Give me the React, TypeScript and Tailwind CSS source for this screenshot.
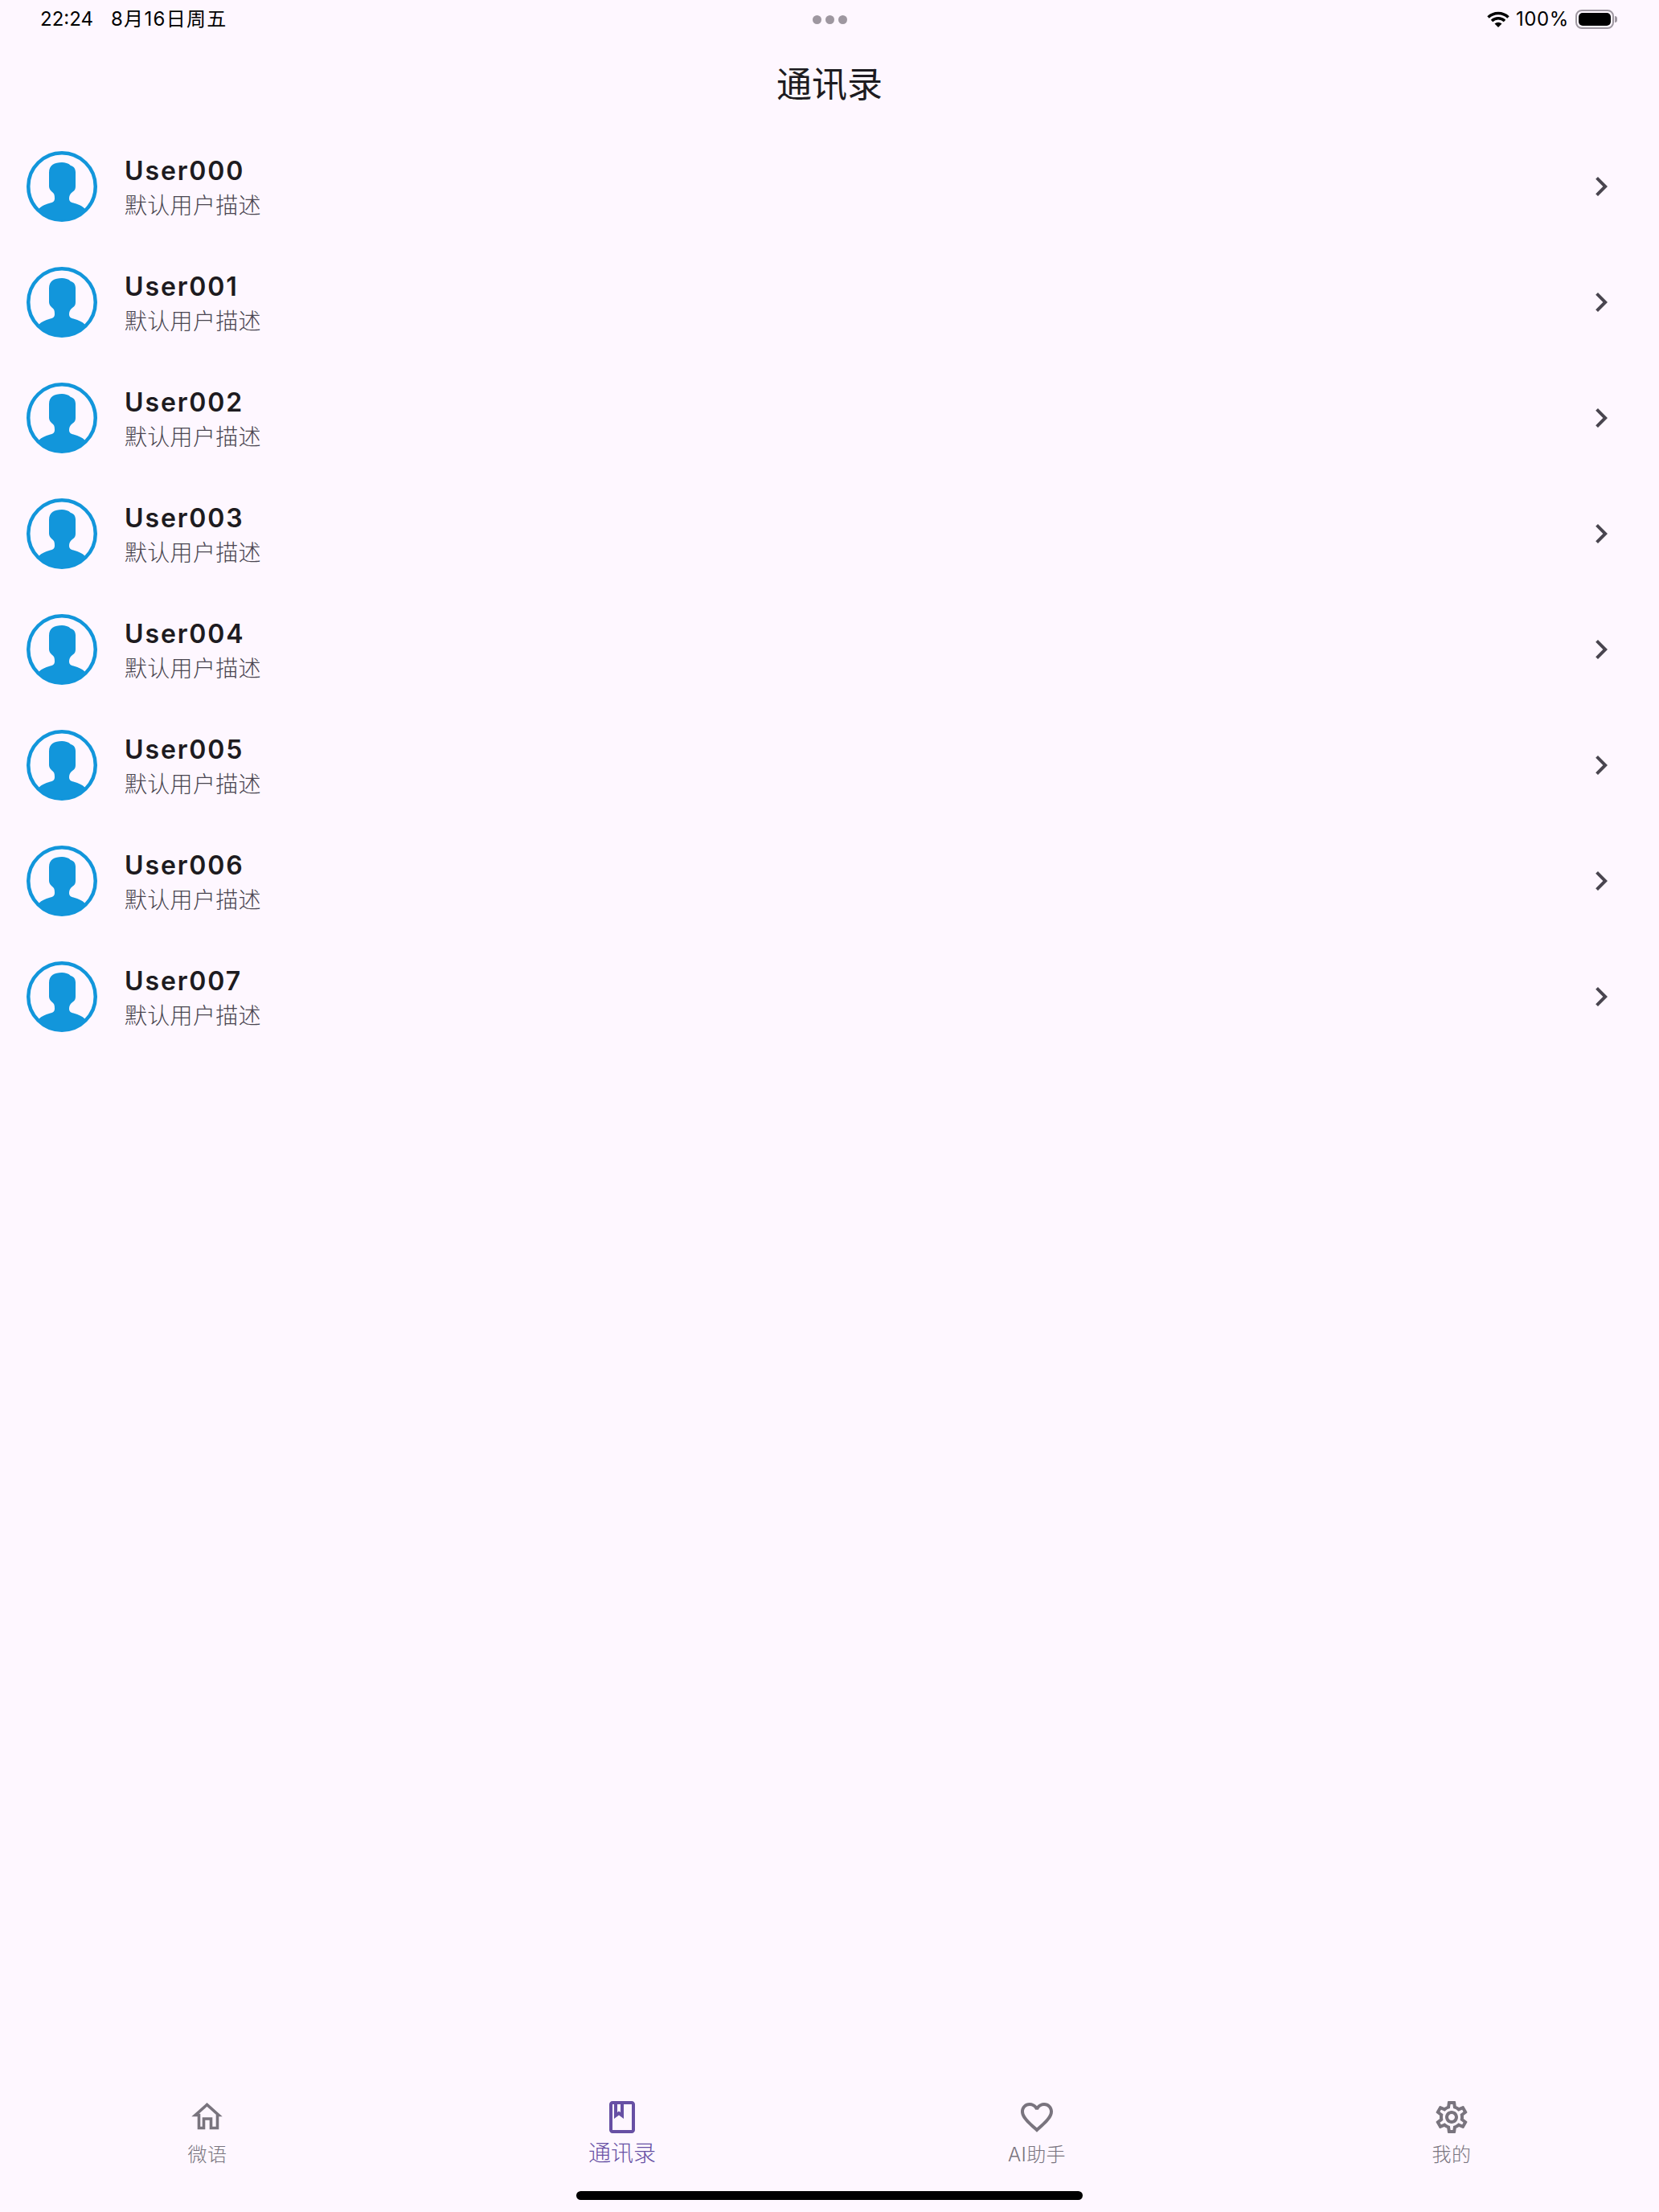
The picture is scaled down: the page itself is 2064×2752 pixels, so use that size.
import { MdChevronRight, MdFavoriteBorder, MdOutlineBook, MdOutlineSettings } from "react-icons/md";

const users = ["User000", "User001", "User002", "User003", "User004", "User005", "User006", "User007"];
const cjk = "font-['Inter','Noto_Sans_CJK_SC',sans-serif]";

function Avatar() {
  return (
    <svg viewBox="0 0 88 88" className="h-[88px] w-[88px] shrink-0">
      <defs>
        <clipPath id="avatar-clip">
          <circle cx="44" cy="44" r="42" />
        </clipPath>
      </defs>
      <circle cx="44" cy="44" r="41.75" fill="none" stroke="#1296db" strokeWidth="4.5" />
      <path
        clipPath="url(#avatar-clip)"
        fill="#1296db"
        d="M44 14C35 14 28 17 28 27L28 44C28 47 30 49 32 51C35 53 35 56 35 59C35 63 32 64 28 65C24 66 19 68 15 72L14 88L74 88L73 72C69 68 64 66 60 65C56 64 53 63 53 59C53 56 54 53 57 51C60 49 61 47 61 44L61 27C61 22 59 19 55 18C52 15 48 14 44 14Z"
      />
    </svg>
  );
}

function HomeIcon() {
  return (
    <svg viewBox="0 -2 60 60" className="h-[60px] w-[60px]" fill="none" stroke="#79747e" strokeWidth="3.6">
      <path d="M19.5 41.500V25.500H15L29.500 12.500 44 25.500H42.500V41.500H34.500V30H25.500V41.500Z" />
    </svg>
  );
}

const tabs = [
  { label: "微语", icon: <HomeIcon /> },
  { label: "通讯录", icon: <MdOutlineBook className="h-[48px] w-[48px] text-[#6750a4]" />, active: true },
  { label: "AI助手", icon: <MdFavoriteBorder className="h-[48px] w-[48px] text-[#79747e]" /> },
  { label: "我的", icon: <MdOutlineSettings className="h-[48px] w-[48px] text-[#79747e]" /> },
];

export default function App() {
  return (
    <div className={`flex h-[2752px] w-full flex-col bg-[#fef7ff] ${cjk}`}>
      <div className="flex h-[48px] items-center justify-between px-[50px] text-[24px] text-black">
        <div className="flex w-[400px] gap-[22px]">
          <span>22:24</span>
          <span className="tracking-[1.3px]">8月16日周五</span>
        </div>
        <div className="flex gap-[5px]">
          <span className="h-[11px] w-[11px] rounded-full bg-[#9e97a0]" />
          <span className="h-[11px] w-[11px] rounded-full bg-[#9e97a0]" />
          <span className="h-[11px] w-[11px] rounded-full bg-[#9e97a0]" />
        </div>
        <div className="flex w-[400px] items-center justify-end gap-[8px] pr-[2px]">
          <svg viewBox="0 0 28 20" className="h-[20px] w-[28px]" fill="none" stroke="#000" strokeWidth="3.5">
            <path d="M1.500 7.500a18 18 0 0 1 25 0M6 12a11.500 11.500 0 0 1 16 0" />
            <path d="M9.500 15.500a7 7 0 0 1 9 0L14 20z" fill="#000" stroke="none" />
          </svg>
          <span className="tracking-[0.6px]">100%</span>
          <div className="flex items-center">
            <div className="flex h-[24px] w-[48px] rounded-[8px] border-2 border-[#9e97a0] p-[2px]">
              <div className="flex-1 rounded-[5px] bg-black" />
            </div>
            <div className="ml-[1px] h-[8px] w-[3px] rounded-r bg-[#9e97a0]" />
          </div>
        </div>
      </div>

      <div className="flex h-[112px] items-center justify-center pt-[2px] text-[44px] text-[#1d1b20]">通讯录</div>

      <div className="flex flex-1 flex-col">
        {users.map((name) => (
          <div key={name} className="flex h-[144px] items-center pr-[48px] pl-[33px]">
            <Avatar />
            <div className="ml-[34px] flex flex-1 flex-col pt-[5px]">
              <span className="text-[32px] leading-[42px] font-semibold tracking-[1.9px] text-[#1d1b20]">{name}</span>
              <span className="mt-[1px] text-[28px] leading-[42px] font-light tracking-[0.3px] text-[#49454f]">默认用户描述</span>
            </div>
            <MdChevronRight className="h-[48px] w-[48px] text-[#49454f]" />
          </div>
        ))}
      </div>

      <div className="grid h-[184px] grid-cols-4">
        {tabs.map((tab) => (
          <div key={tab.label} className="flex flex-col items-center pt-[36px]">
            <div className="flex h-[60px] w-[60px] items-center justify-center">{tab.icon}</div>
            {tab.active ? (
              <span className="mt-[-3px] text-[28px] leading-[36px] font-light text-[#6750a4]">{tab.label}</span>
            ) : (
              <span className="mt-[-1px] text-[24px] leading-[36px] font-light tracking-[0.4px] text-[#79747e]">{tab.label}</span>
            )}
          </div>
        ))}
      </div>

      <div className="relative h-0">
        <div className="absolute bottom-[15px] left-[717px] h-[11px] w-[630px] rounded-full bg-black" />
      </div>
    </div>
  );
}
